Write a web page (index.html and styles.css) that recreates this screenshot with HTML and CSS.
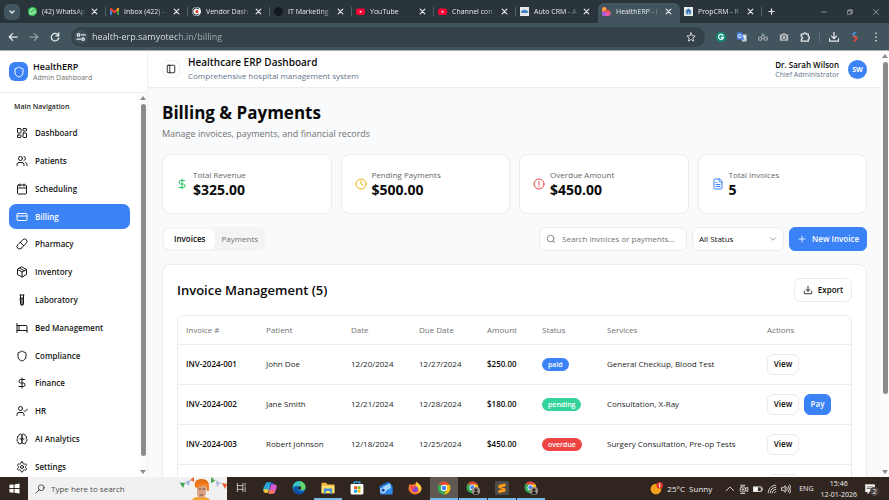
FILE: index.html
```html
<!DOCTYPE html>
<html lang="en">
<head>
    <meta charset="UTF-8">
    <meta name="viewport" content="width=device-width, initial-scale=1.0">
    <title>HealthERP - Billing</title>
    <link rel="stylesheet" href="styles.css">
</head>
<body>

<!-- Shared icons -->
<svg class="sprite" aria-hidden="true">
    <symbol id="i-close" viewBox="0 0 24 24"><path d="M4 4l16 16M20 4L4 20"/></symbol>
    <symbol id="i-shield" viewBox="0 0 24 24"><path d="M20 13c0 5-3.500 7.500-7.660 8.950a1 1 0 0 1-.67-.01C7.500 20.500 4 18 4 13V6a1 1 0 0 1 1-1c2 0 4.500-1.200 6.240-2.720a1.170 1.170 0 0 1 1.520 0C14.510 3.810 17 5 19 5a1 1 0 0 1 1 1z"/></symbol>
    <symbol id="i-dollar" viewBox="0 0 24 24"><path d="M12 2v20M17 5H9.500a3.500 3.500 0 0 0 0 7h5a3.500 3.500 0 0 1 0 7H6"/></symbol>
    <symbol id="i-search" viewBox="0 0 24 24"><circle cx="11" cy="11" r="8"/><path d="m21 21-4.300-4.300"/></symbol>
    <symbol id="i-youtube" viewBox="0 0 24 24"><rect x="0" y="4" width="24" height="17" rx="5" fill="#f03"/><path d="M10 9l6 3.500-6 3.500z" fill="#fff"/></symbol>
    <symbol id="i-chrome" viewBox="0 0 48 48">
        <circle cx="24" cy="24" r="22" fill="#34a853"/>
        <path d="M24 24L5 13A22 22 0 0 1 43 13z" fill="#ea4335"/>
        <path d="M24 13h19A22 22 0 0 1 24 46l10-17z" fill="#fbbc05"/>
        <path d="M5 13l9 16 10-16z" fill="#34a853"/>
        <circle cx="24" cy="24" r="11" fill="#fff"/>
        <circle cx="24" cy="24" r="8" fill="#4285f4"/>
    </symbol>
    <symbol id="i-person" viewBox="0 0 24 24"><circle cx="12" cy="12" r="12" fill="#9b9188"/><path d="M6 22c0-6 2-8 6-8s6 2 6 8z" fill="#1d1b1c"/><circle cx="12" cy="9" r="5" fill="#342a29"/></symbol>
</svg>

<!-- Browser tabs -->
<div class="tab-strip">
    <button class="tab-search" aria-label="Search tabs"><svg viewBox="0 0 24 24"><path d="m6 9 6 6 6-6"/></svg></button>
    <div class="tab">
        <svg class="favicon" viewBox="0 0 24 24"><circle cx="12" cy="12" r="12" fill="#2fc351"/><path d="M5 19l1-4a7 7 0 1 1 3 3z" fill="none" stroke="#fff" stroke-width="2"/><path d="M9 8c0 4 3 7 7 7l1-2-3-1-1 1-3-3 1-1-1-2z" fill="#fff"/></svg>
        <span class="tab-title">(42) WhatsAp</span>
        <button class="tab-close" aria-label="Close tab"><svg><use href="#i-close"/></svg></button>
    </div>
    <div class="tab">
        <svg class="favicon" viewBox="0 0 24 24"><path d="M0 4v17h5V10z" fill="#4285f4"/><path d="M24 4v17h-5V10z" fill="#34a853"/><path d="M0 5c0-2 3-3 5-1l7 6 7-6c2-2 5-1 5 1v3l-12 9L0 8z" fill="#ea4335"/><path d="M19 4c2-2 5-1 5 1v3l-5 4z" fill="#fbbc04"/></svg>
        <span class="tab-title">Inbox (422) -</span>
        <button class="tab-close" aria-label="Close tab"><svg><use href="#i-close"/></svg></button>
    </div>
    <div class="tab">
        <svg class="favicon" viewBox="0 0 24 24"><circle cx="12" cy="12" r="12" fill="#fff"/><path d="M17 5a9 9 0 1 0 0 14" fill="none" stroke="#30404a" stroke-width="3"/><circle cx="13" cy="12" r="4" fill="#e5372c"/></svg>
        <span class="tab-title">Vendor Dash</span>
        <button class="tab-close" aria-label="Close tab"><svg><use href="#i-close"/></svg></button>
    </div>
    <div class="tab">
        <svg class="favicon" viewBox="0 0 24 24"><circle cx="12" cy="12" r="10" fill="#14191c" stroke="#11161a" stroke-width="3" stroke-dasharray="2 2"/></svg>
        <span class="tab-title">IT Marketing</span>
        <button class="tab-close" aria-label="Close tab"><svg><use href="#i-close"/></svg></button>
    </div>
    <div class="tab">
        <svg class="favicon"><use href="#i-youtube"/></svg>
        <span class="tab-title">YouTube</span>
        <button class="tab-close" aria-label="Close tab"><svg><use href="#i-close"/></svg></button>
    </div>
    <div class="tab">
        <svg class="favicon"><use href="#i-youtube"/></svg>
        <span class="tab-title">Channel con</span>
        <button class="tab-close" aria-label="Close tab"><svg><use href="#i-close"/></svg></button>
    </div>
    <div class="tab before-active">
        <svg class="favicon" viewBox="0 0 24 24"><path d="M0 0h24v24H0z" fill="#e6e8ea"/><path d="M4 11l4-4h9l3 4v5H4z" fill="#4a8fd0"/><path d="M3 13h18" stroke="#2d66a3" stroke-width="2"/></svg>
        <span class="tab-title">Auto CRM - A</span>
        <button class="tab-close" aria-label="Close tab"><svg><use href="#i-close"/></svg></button>
    </div>
    <div class="tab active">
        <svg class="favicon" viewBox="0 0 24 24"><path d="M1 3C1 0 4 0 6 0c5 0 7 3 7 8 7 0 10 3 10 8s-3 7-7 7H3c-2 0-2-2-2-3z" fill="#f5573c"/><path d="M1 5c0-4 6-6 9-3 2 2 0 5-4 7l-5 5z" fill="#ffae3d"/><path d="M1 13c8-2 14 2 16 10H3c-2 0-2-2-2-3z" fill="#a65cf5"/><path d="M8 23c1-8 9-11 15-8 0 5-3 8-7 8z" fill="#f355ae"/></svg>
        <span class="tab-title">HealthERP - I</span>
        <button class="tab-close" aria-label="Close tab"><svg><use href="#i-close"/></svg></button>
    </div>
    <div class="tab">
        <svg class="favicon" viewBox="0 0 24 24"><path d="M0 0h24v24H0z" fill="#e6e8ea"/><path d="M12 4l9 8h-3v7H6v-7H3z" fill="#2f6fae"/><path d="M10 13h4v6h-4z" fill="#9fc4e6"/></svg>
        <span class="tab-title">PropCRM - R</span>
        <button class="tab-close" aria-label="Close tab"><svg><use href="#i-close"/></svg></button>
    </div>
    <button class="new-tab" aria-label="New tab"><svg viewBox="0 0 24 24"><path d="M12 3v18M3 12h18"/></svg></button>
    <div class="window-controls">
        <button aria-label="Minimize"><svg viewBox="0 0 24 24"><path d="M2 12h20"/></svg></button>
        <button aria-label="Restore"><svg viewBox="0 0 24 24"><path d="M3 7h14v14H3zM7 7V3h14v14h-4"/></svg></button>
        <button aria-label="Close"><svg viewBox="0 0 24 24"><path d="M2 2l20 20M22 2L2 22"/></svg></button>
    </div>
</div>

<!-- Address bar -->
<div class="toolbar">
    <button aria-label="Back"><svg viewBox="0 0 24 24"><path d="M22 12H3M11 4l-8 8 8 8"/></svg></button>
    <button class="dim" aria-label="Forward"><svg viewBox="0 0 24 24"><path d="M2 12h19M13 4l8 8-8 8"/></svg></button>
    <button aria-label="Reload"><svg viewBox="0 0 24 24"><path d="M20 8a9 9 0 1 0 1 6M21 2v7h-7"/></svg></button>
    <div class="omnibox">
        <button class="site-info" aria-label="Site information"><svg viewBox="0 0 24 24"><path d="M13 7h9M2 17h9"/><circle cx="6" cy="7" r="3"/><circle cx="17" cy="17" r="3"/></svg></button>
        <input class="url" type="text" aria-label="Address" value="health-erp.samyotech.in/billing">
        <button class="star" aria-label="Bookmark"><svg viewBox="0 0 24 24"><path d="M12 2l3 7 7 .6-5.400 4.800L18.300 22 12 18l-6.300 4 1.700-7.600L2 9.600 9 9z"/></svg></button>
    </div>
    <div class="extensions">
        <button aria-label="Grammarly"><svg viewBox="0 0 24 24"><circle cx="12" cy="12" r="12" fill="#0f8f78" stroke="none"/><path d="M17 8a6 6 0 1 0 1 5h-5" stroke="#fff"/></svg></button>
        <button aria-label="Translate"><svg viewBox="0 0 24 24"><path d="M9 6h14v17H12z" fill="#c8ccd0" stroke="none"/><path d="M0 1h12l5 17H0z" fill="#4b84ee" stroke="none"/><path d="M10 8a4 4 0 1 0 0 4H7M15 11h6M18 11c0 4 1 5 3 7" stroke="#fff" stroke-width="2"/></svg></button>
        <button class="dim" aria-label="Extension"><svg viewBox="0 0 24 24"><circle cx="5" cy="16" r="4"/><circle cx="19" cy="16" r="4"/><path d="M8 12l4-7 4 7M10 16h4"/></svg></button>
        <button aria-label="Screenshot"><svg viewBox="0 0 24 24"><path d="M2 6h5l2-3h6l2 3h5v15H2z" fill="#b5babd" stroke="none"/><circle cx="12" cy="13" r="4" fill="#fff" stroke="#596166"/></svg></button>
        <button aria-label="Extensions"><svg viewBox="0 0 24 24"><path d="M3 5h6a3 3 0 0 1 6 0h5v6a3 3 0 0 1 0 6v5H3v-5a3 3 0 0 0 0-6z"/></svg></button>
        <span class="divider"></span>
        <button aria-label="Downloads"><svg viewBox="0 0 24 24"><path d="M12 1v14M6 10l6 6 6-6M1 16v6h22v-6"/></svg></button>
        <button aria-label="Profile"><svg viewBox="0 0 24 24"><path d="M13 1L7 6l9 8" stroke="#3e9ad8" stroke-width="4"/><path d="M8 10l9 5-7 7" stroke="#e64a35" stroke-width="4"/></svg></button>
        <button aria-label="Menu"><svg viewBox="0 0 24 24"><g fill="#fff" stroke="none"><circle cx="12" cy="3" r="2"/><circle cx="12" cy="12" r="2"/><circle cx="12" cy="21" r="2"/></g></svg></button>
    </div>
</div>

<div class="app">
    <aside class="sidebar">
        <div class="brand">
            <span class="brand-logo"><svg><use href="#i-shield"/></svg></span>
            <div>
                <div class="brand-name">HealthERP</div>
                <div class="brand-sub">Admin Dashboard</div>
            </div>
        </div>
        <div class="sidebar-body">
            <nav class="nav">
                <h2>Main Navigation</h2>
                <a href="#"><svg viewBox="0 0 24 24"><rect x="3" y="3" width="7" height="9" rx="1"/><rect x="14" y="3" width="7" height="5" rx="1"/><rect x="14" y="12" width="7" height="9" rx="1"/><rect x="3" y="16" width="7" height="5" rx="1"/></svg>Dashboard</a>
                <a href="#"><svg viewBox="0 0 24 24"><path d="M16 21v-2a4 4 0 0 0-4-4H6a4 4 0 0 0-4 4v2M22 21v-2a4 4 0 0 0-3-3.870M16 3.130a4 4 0 0 1 0 7.750"/><circle cx="9" cy="7" r="4"/></svg>Patients</a>
                <a href="#"><svg viewBox="0 0 24 24"><rect x="3" y="4" width="18" height="18" rx="2"/><path d="M8 2v4M16 2v4M3 10h18"/></svg>Scheduling</a>
                <a href="#" class="current"><svg viewBox="0 0 24 24"><rect x="2" y="5" width="20" height="14" rx="2"/><path d="M2 10h20"/></svg>Billing</a>
                <a href="#"><svg viewBox="0 0 24 24"><path d="m10.500 20.500 10-10a4.950 4.950 0 1 0-7-7l-10 10a4.950 4.950 0 1 0 7 7ZM8.500 8.500l7 7"/></svg>Pharmacy</a>
                <a href="#"><svg viewBox="0 0 24 24"><path d="M12 2l9 5v10l-9 5-9-5V7zM3 7l9 5 9-5M12 12v10M7.500 4.500l9 5"/></svg>Inventory</a>
                <a href="#"><svg viewBox="0 0 24 24"><path d="M8 2h8M9 2v17a3 3 0 0 0 6 0V2"/><path d="M9 8h6v11a3 3 0 0 1-6 0z" fill="#777"/></svg>Laboratory</a>
                <a href="#"><svg viewBox="0 0 24 24"><path d="M2 3v18M2 7h18a2 2 0 0 1 2 2v12M2 17h20M6 7v10"/></svg>Bed Management</a>
                <a href="#"><svg><use href="#i-shield"/></svg>Compliance</a>
                <a href="#"><svg><use href="#i-dollar"/></svg>Finance</a>
                <a href="#"><svg viewBox="0 0 24 24"><path d="M16 21v-2a4 4 0 0 0-4-4H6a4 4 0 0 0-4 4v2M16 11l2 2 5-5"/><circle cx="9" cy="7" r="4"/></svg>HR</a>
                <a href="#"><svg viewBox="0 0 24 24"><path d="M12 5a3 3 0 1 0-6 .1 4 4 0 0 0-2.500 5.800 4 4 0 0 0 .5 6.600A4 4 0 1 0 12 18zM12 5a3 3 0 1 1 6 .1 4 4 0 0 1 2.500 5.800 4 4 0 0 1-.5 6.600A4 4 0 1 1 12 18zM8 12h8"/></svg>AI Analytics</a>
                <a href="#"><svg viewBox="0 0 24 24"><path d="M12.220 2h-.44a2 2 0 0 0-2 2v.18a2 2 0 0 1-1 1.730l-.43.25a2 2 0 0 1-2 0l-.15-.08a2 2 0 0 0-2.730.73l-.22.38a2 2 0 0 0 .73 2.730l.15.1a2 2 0 0 1 1 1.720v.51a2 2 0 0 1-1 1.740l-.15.09a2 2 0 0 0-.73 2.730l.22.38a2 2 0 0 0 2.730.73l.15-.08a2 2 0 0 1 2 0l.43.25a2 2 0 0 1 1 1.730V20a2 2 0 0 0 2 2h.44a2 2 0 0 0 2-2v-.18a2 2 0 0 1 1-1.730l.43-.25a2 2 0 0 1 2 0l.15.08a2 2 0 0 0 2.730-.73l.22-.39a2 2 0 0 0-.73-2.730l-.15-.08a2 2 0 0 1-1-1.740v-.5a2 2 0 0 1 1-1.740l.15-.09a2 2 0 0 0 .73-2.730l-.22-.38a2 2 0 0 0-2.730-.73l-.15.08a2 2 0 0 1-2 0l-.43-.25a2 2 0 0 1-1-1.730V4a2 2 0 0 0-2-2z"/><circle cx="12" cy="12" r="3"/></svg>Settings</a>
            </nav>
            <div class="scrollbar"><span class="arrow up"></span><span class="thumb nav-thumb"></span><span class="arrow down"></span></div>
        </div>
    </aside>

    <div class="page">
        <div class="page-inner">
            <header class="topbar">
                <button class="toggle" aria-label="Toggle sidebar"><svg viewBox="0 0 24 24"><rect x="3" y="3" width="18" height="18" rx="2"/><path d="M9 3v18"/></svg></button>
                <div class="topbar-title">
                    <div class="app-name">Healthcare ERP Dashboard</div>
                    <div class="app-sub">Comprehensive hospital management system</div>
                </div>
                <div class="user">
                    <div class="user-name">Dr. Sarah Wilson</div>
                    <div class="user-role">Chief Administrator</div>
                </div>
                <span class="avatar">SW</span>
            </header>

            <main>
                <h1>Billing &amp; Payments</h1>
                <p class="lead">Manage invoices, payments, and financial records</p>

                <div class="stats">
                    <div class="stat">
                        <svg class="green"><use href="#i-dollar"/></svg>
                        <div><div class="stat-label">Total Revenue</div><div class="stat-value">$325.00</div></div>
                    </div>
                    <div class="stat">
                        <svg class="yellow" viewBox="0 0 24 24"><circle cx="12" cy="12" r="10"/><path d="M12 6v6l4 2"/></svg>
                        <div><div class="stat-label">Pending Payments</div><div class="stat-value">$500.00</div></div>
                    </div>
                    <div class="stat">
                        <svg class="red" viewBox="0 0 24 24"><circle cx="12" cy="12" r="10"/><path d="M12 7v6M12 16v1"/></svg>
                        <div><div class="stat-label">Overdue Amount</div><div class="stat-value">$450.00</div></div>
                    </div>
                    <div class="stat">
                        <svg class="blue" viewBox="0 0 24 24"><path d="M15 2H6a2 2 0 0 0-2 2v16a2 2 0 0 0 2 2h12a2 2 0 0 0 2-2V7zM14 2v4a2 2 0 0 0 2 2h4M10 9H8M16 13H8M16 17H8"/></svg>
                        <div><div class="stat-label">Total Invoices</div><div class="stat-value">5</div></div>
                    </div>
                </div>

                <div class="filters">
                    <div class="segmented">
                        <button class="selected">Invoices</button>
                        <button>Payments</button>
                    </div>
                    <label class="search">
                        <svg><use href="#i-search"/></svg>
                        <input type="text" placeholder="Search invoices or payments..." aria-label="Search invoices or payments">
                    </label>
                    <div class="select">
                        <select aria-label="Status"><option>All Status</option></select>
                        <svg viewBox="0 0 24 24"><path d="m6 9 6 6 6-6"/></svg>
                    </div>
                    <button class="btn primary new-invoice"><svg viewBox="0 0 24 24"><path d="M5 12h14M12 5v14"/></svg>New Invoice</button>
                </div>

                <section class="panel">
                    <div class="panel-head">
                        <h2>Invoice Management (5)</h2>
                        <button class="btn export"><svg viewBox="0 0 24 24"><path d="M21 15v4a2 2 0 0 1-2 2H5a2 2 0 0 1-2-2v-4M7 10l5 5 5-5M12 15V3"/></svg>Export</button>
                    </div>
                    <div class="table-wrap">
                        <table>
                            <thead>
                                <tr>
                                    <th>Invoice #</th>
                                    <th>Patient</th>
                                    <th>Date</th>
                                    <th>Due Date</th>
                                    <th>Amount</th>
                                    <th>Status</th>
                                    <th>Services</th>
                                    <th>Actions</th>
                                </tr>
                            </thead>
                            <tbody>
                                <tr>
                                    <td class="strong">INV-2024-001</td>
                                    <td>John Doe</td>
                                    <td>12/20/2024</td>
                                    <td>12/27/2024</td>
                                    <td class="strong">$250.00</td>
                                    <td><span class="badge paid">paid</span></td>
                                    <td>General Checkup, Blood Test</td>
                                    <td><div class="actions"><button class="btn">View</button></div></td>
                                </tr>
                                <tr>
                                    <td class="strong">INV-2024-002</td>
                                    <td>Jane Smith</td>
                                    <td>12/21/2024</td>
                                    <td>12/28/2024</td>
                                    <td class="strong">$180.00</td>
                                    <td><span class="badge pending">pending</span></td>
                                    <td>Consultation, X-Ray</td>
                                    <td><div class="actions"><button class="btn">View</button><button class="btn primary">Pay</button></div></td>
                                </tr>
                                <tr>
                                    <td class="strong">INV-2024-003</td>
                                    <td>Robert Johnson</td>
                                    <td>12/18/2024</td>
                                    <td>12/25/2024</td>
                                    <td class="strong">$450.00</td>
                                    <td><span class="badge overdue">overdue</span></td>
                                    <td>Surgery Consultation, Pre-op Tests</td>
                                    <td><div class="actions"><button class="btn">View</button></div></td>
                                </tr>
                                <tr>
                                    <td></td><td></td><td></td><td></td><td></td><td></td><td></td>
                                    <td><div class="actions"><button class="btn" aria-label="View"></button></div></td>
                                </tr>
                            </tbody>
                        </table>
                    </div>
                </section>
            </main>
        </div>
        <div class="scrollbar page-scroll"><span class="arrow up"></span><span class="thumb page-thumb"></span><span class="arrow down"></span></div>
    </div>
</div>

<!-- Windows taskbar -->
<footer class="taskbar">
    <button class="start" aria-label="Start"><svg viewBox="0 0 24 24"><path d="M1 4l9-1v8H1zM12 3l11-2v10H12zM1 13h9v8l-9-1zM12 13h11v10l-11-2z" fill="#fff"/></svg></button>
    <label class="task-search">
        <svg viewBox="0 0 24 24"><circle cx="15" cy="9" r="7"/><path d="M10 14l-8 8"/></svg>
        <input type="text" placeholder="Type here to search" aria-label="Type here to search">
        <svg class="doodle" viewBox="0 0 48 23">
            <path d="M0 5q8 4 14-4M33 0q6 7 15 8" fill="none" stroke="#9aa" stroke-width=".5"/>
            <path d="M1 6l5 0-2 5z" fill="#3fa34d"/><path d="M6 5l5-2-1 6z" fill="#a9b5e0"/><path d="M11 3l4-3 0 5z" fill="#ee6a38"/>
            <path d="M32 0l4 4-4 2z" fill="#3fa34d"/><path d="M37 4l4 2-3 4z" fill="#a9b5e0"/><path d="M43 6l5 1-2 5z" fill="#ee5a28"/>
            <path d="M13 23q2-3 6-3h7q4 1 5 3z" fill="#f3a52c"/>
            <path d="M18 9h9v7q-1 5-5 5t-4-5z" fill="#d9a280"/>
            <path d="M16 10Q14 3 21 2q9-1 9 7l0 5-2 0-1-5q-5-1-9 2z" fill="#f47d1f"/>
            <path d="M17 7q6-4 12-1M18 4q6-2 9 0" fill="none" stroke="#c95a10" stroke-width=".6"/>
            <path d="M20 12h2M24 12h2M21 18h3" stroke="#533" stroke-width=".8"/>
        </svg>
    </label>
    <div class="task-apps">
        <button aria-label="Task view"><svg class="small" viewBox="0 0 24 24"><path d="M3 3v18M15 3v18M3 8h12M3 16h12M20 3v4M20 11v10" fill="none" stroke="#ccc" stroke-width="2"/></svg></button>
        <button aria-label="Copilot"><svg viewBox="0 0 24 24"><path d="M6 2h8l-4 16H4c-4 0-4-4-3-7z" fill="#2ba6dc"/><path d="M5 14h5l-2 6c-5 2-8-1-7-6z" fill="#f2c53c"/><path d="M14 2c3 0 4 2 5 5h-8z" fill="#2456c9"/><path d="M14 6h6c4 0 4 4 3 7l-2 6c-1 3-3 3-5 3H9z" fill="#d95ad0"/><path d="M11 16h9c-1 5-3 6-5 6H9z" fill="#f4784f"/></svg></button>
        <button aria-label="Edge"><svg viewBox="0 0 24 24"><circle cx="12" cy="12" r="11" fill="#1470c4"/><path d="M1 11A11 11 0 0 1 23 11c0 5-5 6-9 4 2-4-2-7-6-6-4 0-6 1-7 2z" fill="#38c6c0"/><path d="M13 1c7 0 11 6 10 11-1 4-6 4-9 3 2-4 1-9-1-14z" fill="#66d66c"/><path d="M8 12c0 6 5 8 13 7-6 6-15 4-17-2-1-5 2-8 5-8z" fill="#0b4a9c"/><circle cx="13" cy="12" r="3" fill="#312a24"/></svg></button>
        <button class="open" aria-label="File Explorer"><svg viewBox="0 0 24 24"><path d="M1 3h8l2 3h12v15H1z" fill="#f2b83b"/><path d="M1 8h22v13H1z" fill="#ffdc70"/><path d="M5 13h14v9h-3v-5H8v5H5z" fill="#3f8fdb"/></svg></button>
        <button aria-label="Store"><svg viewBox="0 0 24 24"><path d="M7 6V2h10v4" fill="none" stroke="#3ab0ef" stroke-width="2"/><rect x="1" y="5" width="22" height="18" rx="2" fill="#fff"/><path d="M7 9h5v5H7z" fill="#f25022"/><path d="M13 9h5v5h-5z" fill="#7fba00"/><path d="M7 15h5v5H7z" fill="#00a4ef"/><path d="M13 15h5v5h-5z" fill="#ffb900"/></svg></button>
        <button aria-label="Mail"><svg viewBox="0 0 24 24"><path d="M1 9L16 1l7 7v14H3z" fill="#1d6fd0"/><path d="M6 10l13-6 2 8-9 5z" fill="#9fd6fa"/><path d="M1 10l11 7 11-7v13H2z" fill="#2c8bea"/><circle cx="7" cy="16" r="4" fill="#1758b0" stroke="#bfe1ff"/></svg></button>
        <button aria-label="Firefox"><svg viewBox="0 0 24 24"><path d="M3 5l3 2c2-2 4-1 6-1l2-5c2 3 8 5 9 11 0 7-5 11-11 11S1 18 1 13c0-3 1-6 2-8z" fill="#ff7b2b"/><path d="M14 1c2 3 8 5 9 11 0 3-2 7-4 8 1-8-4-9-5-12z" fill="#ffd23e"/><circle cx="12" cy="14" r="5" fill="#8046d9"/><path d="M4 9c4-2 6 1 9 2-1 3-4 1-6 4-2-1-3-3-3-6z" fill="#ff4a54"/></svg></button>
        <button class="open focused" aria-label="Chrome"><svg><use href="#i-chrome"/></svg></button>
        <button class="open" aria-label="Chrome profile 1"><svg viewBox="0 0 24 24"><use href="#i-chrome" width="22" height="22"/><use href="#i-person" x="10" y="10" width="14" height="14"/></svg></button>
        <button class="open" aria-label="Sublime Text"><svg viewBox="0 0 24 24"><rect width="24" height="24" rx="2" fill="#4a4a4a"/><path d="M18 4v5l-7 2 7 2v5L6 21v-5l7-2-7-2V7z" fill="#ff9b1a"/></svg></button>
        <button class="open" aria-label="Chrome profile 2"><svg viewBox="0 0 24 24"><use href="#i-chrome" width="22" height="22"/><use href="#i-person" x="10" y="10" width="14" height="14"/></svg></button>
    </div>
    <div class="tray">
        <svg class="weather" viewBox="0 0 24 24"><circle cx="11" cy="13" r="10" fill="#f7a01b"/><path d="M3 7a10 10 0 0 0 16 12A10 10 0 0 1 3 7" fill="#e86d10"/><circle cx="18" cy="6" r="6" fill="#d92f2a"/><path d="M18 3v6" stroke="#fff" stroke-width="2"/></svg>
        <span class="temp">25°C&nbsp; Sunny</span>
        <svg viewBox="0 0 24 24"><path d="M3 16l9-9 9 9"/></svg>
        <svg viewBox="0 0 24 24"><rect x="3" y="7" width="12" height="12" rx="3"/><circle cx="9" cy="13" r="2"/><path d="M4 3h10M4 23h10M15 11l6-3v10l-6-3"/></svg>
        <svg viewBox="0 0 24 24"><path d="M1 7h19v11H1zM22 10v5"/><path d="M2 8h9v9H2z" fill="#fff"/></svg>
        <svg viewBox="0 0 24 24"><path d="M3 21C3 11 11 3 21 3M8 21C8 14 14 8 21 8M13 21c0-4 4-8 8-8M18 21l3-3"/></svg>
        <svg viewBox="0 0 24 24"><path d="M1 9v6h4l5 5V4L5 9zM14 8q3 4 0 8M18 5q5 7 0 14M21 2q7 10 0 20"/></svg>
        <span class="lang">ENG</span>
        <div class="clock"><span>15:46</span><span>12-01-2026</span></div>
        <div class="notify">
            <svg viewBox="0 0 24 24"><path d="M1 2h22v16H11l-4 5v-5H1z" fill="#fff"/><path d="M5 7h14M5 11h14" stroke="#554a42"/></svg>
            <span class="count">2</span>
        </div>
    </div>
</footer>

</body>
</html>
```

FILE: styles.css
```css
* {
    box-sizing: border-box;
}
body {
    margin: 0;
    height: 100vh;
    display: flex;
    flex-direction: column;
    overflow: hidden;
    font-family: "Open Sans", "Noto Sans", sans-serif;
    font-size: 8px;
    line-height: 12px;
    color: #0a0a0a;
    background: #f8fafc;
}
button, input, select {
    font: inherit;
    color: inherit;
    margin: 0;
    padding: 0;
    border: 0;
    background: none;
}
h1, h2, p {
    margin: 0;
}
a {
    color: inherit;
    text-decoration: none;
}
svg {
    display: block;
    flex: none;
    width: 12px;
    height: 12px;
    fill: none;
    stroke: currentColor;
    stroke-width: 2;
    stroke-linecap: round;
    stroke-linejoin: round;
}
.sprite {
    position: absolute;
    width: 0;
    height: 0;
}

/* browser tabs */
.tab-strip {
    display: flex;
    flex: none;
    height: 23px;
    background: #29353b;
    color: #e8eaed;
}
.tab-search {
    display: flex;
    align-items: center;
    justify-content: center;
    width: 16px;
    height: 16px;
    margin: 4px 4px 0 4px;
    border-radius: 5px;
    background: #42545d;
}
.tab-search svg {
    width: 8px;
    height: 8px;
    stroke-width: 4;
}
.tab {
    position: relative;
    display: flex;
    align-items: center;
    flex: 0 1 82px;
    min-width: 0;
    padding: 0 8px 0 4px;
}
.tab::after {
    content: "";
    position: absolute;
    right: 0;
    top: 7px;
    width: 1px;
    height: 9px;
    background: #50616a;
}
.tab.active::after, .tab.before-active::after {
    display: none;
}
.tab.active {
    margin-top: 3px;
    padding-bottom: 3px;
    border-radius: 6px 6px 0 0;
    background: #42545d;
}
.favicon {
    width: 9px;
    height: 9px;
    stroke: none;
}
.tab-title {
    flex: 1;
    min-width: 0;
    margin: 0 1px 0 5px;
    font-size: 7px;
    white-space: nowrap;
    -webkit-mask-image: linear-gradient(to right, #000 32px, transparent 46px);
    mask-image: linear-gradient(to right, #000 32px, transparent 46px);
}
.tab-close svg {
    width: 7px;
    height: 7px;
    stroke-width: 4;
}
.new-tab {
    padding: 0 6px;
}
.new-tab svg {
    width: 7px;
    height: 7px;
    stroke-width: 4;
}
.window-controls {
    display: flex;
    gap: 20px;
    margin-left: auto;
    padding-right: 10px;
}
.window-controls svg {
    width: 6px;
    height: 6px;
}

/* address bar */
.toolbar {
    display: flex;
    align-items: center;
    flex: none;
    height: 27px;
    padding: 0 8px;
    gap: 11px;
    background: #42545d;
    color: #e8eaed;
}
.toolbar svg {
    width: 10px;
    height: 10px;
    stroke-width: 3;
}
.toolbar .dim {
    opacity: 0.5;
}
.omnibox {
    display: flex;
    align-items: center;
    flex: 1;
    height: 20px;
    padding: 0 9px 0 3px;
    border-radius: 10px;
    background: #364249;
}
.site-info {
    padding: 2px;
    border-radius: 50%;
    background: #42505a;
}
.url {
    flex: 1;
    min-width: 0;
    margin-left: 4px;
    font-size: 9px;
    background: linear-gradient(to right, #e8eaed 84px, #a7b0b5 84px);
    -webkit-background-clip: text;
    background-clip: text;
    color: transparent;
}
.omnibox .star svg {
    stroke-width: 2;
}
.extensions {
    display: flex;
    align-items: center;
    gap: 11px;
}
.divider {
    width: 1px;
    height: 10px;
    margin: 0 -2px;
    background: #5d6d75;
}

/* app shell */
.app {
    display: flex;
    flex: 1;
    min-height: 0;
    overflow: hidden;
    border-top: 1px solid #a8b0b4;
    background: #f8fafc;
}
.sidebar {
    display: flex;
    flex-direction: column;
    flex: none;
    width: 148px;
    border-right: 1px solid #f0f1f3;
    background: #fff;
}
.brand {
    display: flex;
    align-items: center;
    gap: 5px;
    flex: none;
    height: 42px;
    padding-left: 9px;
    border-bottom: 1px solid #ededed;
}
.brand-logo {
    display: flex;
    align-items: center;
    justify-content: center;
    width: 19px;
    height: 19px;
    border-radius: 6px;
    background: #3b82f6;
    color: #fff;
}
.brand-name {
    font-size: 9px;
    font-weight: 600;
}
.brand-sub {
    font-size: 7px;
    line-height: 10px;
    color: #737373;
}
.sidebar-body {
    display: flex;
    flex: 1;
    min-height: 0;
}
.nav {
    display: flex;
    flex-direction: column;
    flex: 1;
    gap: 3px;
    margin-bottom: -2px;
    padding: 7px 9px 0;
}
.nav h2 {
    margin: 0 0 4px 5px;
    font-size: 7px;
    font-weight: 600;
    line-height: 14px;
    color: #262626;
}
.nav a {
    display: flex;
    align-items: center;
    flex: 1;
    gap: 7px;
    padding-left: 7px;
    border-radius: 7px;
    font-weight: 600;
    color: #171717;
}
.nav a.current {
    background: #3b82f6;
    color: #fff;
}
.scrollbar {
    display: flex;
    flex-direction: column;
    align-items: center;
    flex: none;
    width: 8px;
    padding: 3px 0;
    background: #fcfcfc;
}
.arrow {
    border: 3px solid transparent;
}
.arrow.up {
    border-top: 0;
    border-bottom: 4px solid #8b8b8b;
}
.arrow.down {
    margin-top: auto;
    border-bottom: 0;
    border-top: 4px solid #8b8b8b;
}
.thumb {
    width: 5px;
    margin-top: 4px;
    border-radius: 3px;
    background: #8b8b8b;
}
.nav-thumb {
    height: 93%;
}
.page-thumb {
    height: 79%;
}

/* page */
.page {
    display: flex;
    flex: 1;
    min-width: 0;
}
.page-inner {
    flex: 1;
    min-width: 0;
    overflow: hidden;
}
.topbar {
    display: flex;
    align-items: center;
    height: 37px;
    padding: 0 14px;
    border-bottom: 1px solid #ededed;
    background: #fff;
}
.toggle {
    padding: 3px;
    border: 1px solid #efefef;
    border-radius: 6px;
}
.toggle svg {
    width: 10px;
    height: 10px;
}
.topbar-title {
    margin-left: 8px;
}
.app-name {
    font-size: 10px;
    font-weight: 600;
    line-height: 14px;
}
.app-sub {
    line-height: 14px;
    color: #64748b;
}
.user {
    margin-left: auto;
    text-align: right;
}
.user-name {
    font-weight: 600;
    line-height: 11px;
}
.user-role {
    font-size: 7px;
    line-height: 10px;
    color: #64748b;
}
.avatar {
    width: 19px;
    height: 19px;
    margin-left: 9px;
    border-radius: 50%;
    background: #3b82f6;
    color: #fff;
    font-size: 7px;
    font-weight: 700;
    line-height: 19px;
    text-align: center;
}
main {
    padding: 13px 14px 0;
}
h1 {
    font-size: 17px;
    font-weight: 700;
    line-height: 24px;
}
.lead {
    font-size: 9px;
    line-height: 18px;
    color: #737373;
}
.stats {
    display: grid;
    grid-template-columns: repeat(4, 1fr);
    gap: 9px;
    margin-top: 11px;
}
.stat {
    display: flex;
    align-items: center;
    gap: 5px;
    height: 60px;
    padding-left: 13px;
    border: 1px solid #ebecee;
    border-radius: 8px;
    background: #fff;
}
.stat-label {
    color: #64666a;
}
.stat-value {
    font-size: 14px;
    font-weight: 700;
    line-height: 18px;
}
.green { color: #22c55e; }
.yellow { color: #eab308; }
.red { color: #ef4444; }
.blue { color: #3b82f6; }
.filters {
    display: flex;
    align-items: center;
    gap: 5px;
    margin-top: 13px;
}
.segmented {
    display: flex;
    height: 24px;
    margin-right: auto;
    padding: 2px;
    border-radius: 7px;
    background: #f4f4f5;
}
.segmented button {
    padding: 0 6px;
    border-radius: 6px;
    font-weight: 500;
    color: #737373;
}
.segmented .selected {
    padding: 0 10px;
    background: #fff;
    font-weight: 600;
    color: #0a0a0a;
}
.search {
    display: flex;
    align-items: center;
    gap: 6px;
    width: 148px;
    height: 24px;
    padding: 0 6px;
    border: 1px solid #ebebeb;
    border-radius: 7px;
    background: #fff;
    color: #737373;
}
.search svg {
    width: 10px;
    height: 10px;
}
.search input {
    flex: 1;
    min-width: 0;
}
input::placeholder {
    color: #737373;
    opacity: 1;
}
input {
    outline: none;
}
.select {
    position: relative;
    width: 92px;
}
.select select {
    width: 100%;
    height: 24px;
    padding: 0 6px;
    border: 1px solid #ebebeb;
    border-radius: 7px;
    background: #fff;
    appearance: none;
}
.select svg {
    position: absolute;
    right: 6px;
    top: 7px;
    width: 10px;
    height: 10px;
    color: #888;
    pointer-events: none;
}
.btn {
    display: flex;
    align-items: center;
    justify-content: center;
    height: 21px;
    min-width: 32px;
    padding: 0 5px;
    border: 1px solid #ebebeb;
    border-radius: 6px;
    background: #fff;
    font-weight: 600;
    white-space: nowrap;
}
.btn.primary {
    min-width: 27px;
    border-color: #3b82f6;
    background: #3b82f6;
    color: #fff;
}
.btn svg {
    width: 10px;
    height: 10px;
}
.btn.new-invoice, .btn.export {
    height: 24px;
    gap: 5px;
}
.btn.new-invoice {
    width: 78px;
}
.btn.export {
    width: 58px;
}
.panel {
    margin-top: 13px;
    padding: 13px 14px;
    border: 1px solid #ebecee;
    border-radius: 8px;
    background: #fff;
}
.panel-head {
    display: flex;
    align-items: center;
    justify-content: space-between;
    margin-bottom: 13px;
}
.panel-head h2 {
    font-size: 13px;
    font-weight: 600;
    line-height: 20px;
}
.table-wrap {
    border: 1px solid #ebebeb;
    border-radius: 7px;
    overflow: hidden;
}
table {
    width: 100%;
    border-collapse: collapse;
    table-layout: fixed;
}
th, td {
    padding: 0 0 0 8px;
    text-align: left;
    font-weight: 400;
    white-space: nowrap;
    border-bottom: 1px solid #ededed;
}
th {
    height: 28px;
    font-weight: 500;
    color: #737373;
}
td {
    height: 40px;
    color: #262626;
}
th:nth-child(1) { width: 80px; }
th:nth-child(2) { width: 85px; }
th:nth-child(3) { width: 68px; }
th:nth-child(4) { width: 68px; }
th:nth-child(5) { width: 55px; }
th:nth-child(6) { width: 65px; }
th:nth-child(7) { width: 160px; }
th:nth-child(8) { width: 92px; }
.strong {
    font-weight: 600;
    color: #0a0a0a;
}
.badge {
    display: inline-block;
    padding: 0 6px;
    border-radius: 7px;
    font-size: 7px;
    font-weight: 600;
    line-height: 13px;
    color: #fff;
}
.paid { background: #3b82f6; }
.pending { background: #34d399; }
.overdue { background: #ef4444; }
.actions {
    display: flex;
    gap: 5px;
    color: #0a0a0a;
}

/* taskbar */
.taskbar {
    display: flex;
    flex: none;
    height: 23px;
    background: #30261f;
    color: #f2f2f2;
}
.start {
    display: flex;
    align-items: center;
    justify-content: center;
    width: 28px;
}
.start svg {
    width: 11px;
    height: 11px;
    stroke: none;
}
.task-search {
    display: flex;
    align-items: center;
    gap: 6px;
    width: 199px;
    padding-left: 7px;
    background: #f1f1f1;
    color: #333;
}
.task-search svg {
    width: 10px;
    height: 10px;
}
.task-search input {
    flex: 1;
    min-width: 0;
    font-size: 8px;
}
.task-search input::placeholder {
    color: #505050;
}
.task-search .doodle {
    width: 48px;
    height: 23px;
    stroke: none;
}
.task-apps {
    display: flex;
    gap: 1px;
}
.task-apps button {
    display: flex;
    align-items: center;
    justify-content: center;
    width: 28px;
    border-bottom: 2px solid transparent;
}
.task-apps svg {
    width: 14px;
    height: 14px;
    stroke: none;
}
.task-apps .small {
    width: 11px;
    height: 11px;
}
.task-apps .open {
    border-bottom-color: #76b9ed;
}
.task-apps .focused {
    background: #5f5853;
}
.tray {
    display: flex;
    align-items: center;
    gap: 4px;
    margin-left: auto;
    padding-right: 14px;
}
.tray svg {
    width: 10px;
    height: 10px;
}
.tray .weather {
    width: 13px;
    height: 13px;
    stroke: none;
}
.temp {
    margin-right: 9px;
}
.lang {
    margin-left: 4px;
    font-size: 7px;
}
.clock {
    display: flex;
    flex-direction: column;
    align-items: center;
    margin-left: 3px;
    font-size: 7px;
    line-height: 11px;
}
.notify {
    position: relative;
    margin-left: 4px;
}
.count {
    position: absolute;
    left: 5px;
    top: 3px;
    width: 9px;
    height: 9px;
    border-radius: 50%;
    background: #4b4440;
    font-size: 7px;
    line-height: 9px;
    text-align: center;
}
```
